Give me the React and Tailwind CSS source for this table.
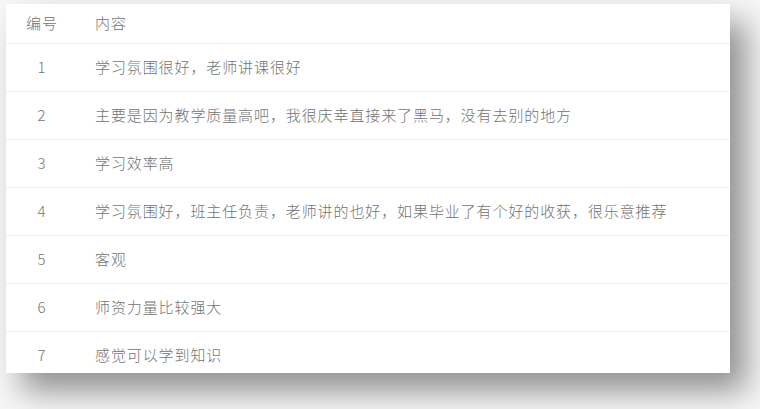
import React from "react";

const rows = [
  "学习氛围很好，老师讲课很好",
  "主要是因为教学质量高吧，我很庆幸直接来了黑马，没有去别的地方",
  "学习效率高",
  "学习氛围好，班主任负责，老师讲的也好，如果毕业了有个好的收获，很乐意推荐",
  "客观",
  "师资力量比较强大",
  "感觉可以学到知识",
];

const font = { fontFamily: '"Noto Sans CJK SC", "Liberation Sans", sans-serif' };

export default function App() {
  return (
    <div className="w-[760px] h-[409px] overflow-hidden bg-[#f7f7f7] pt-[4px] pl-[6px]" style={font}>
      <div className="w-[724px] h-[369px] bg-white overflow-hidden shadow-[16px_18px_30px_rgba(0,0,0,0.42)]">
        <div className="flex items-center h-[39px] text-[15px] tracking-[0.9px] text-[#737373] font-light">
          <div className="w-[72px] text-center">编号</div>
          <div className="pl-[17px]">内容</div>
        </div>
        {rows.map((text, i) => (
          <div
            key={i}
            className="flex items-center h-[48px] border-t border-[#eef0f4] text-[15px] tracking-[0.9px] text-[#737373] font-light"
          >
            <div className="w-[72px] text-center">{i + 1}</div>
            <div className="pl-[17px]">{text}</div>
          </div>
        ))}
      </div>
    </div>
  );
}
